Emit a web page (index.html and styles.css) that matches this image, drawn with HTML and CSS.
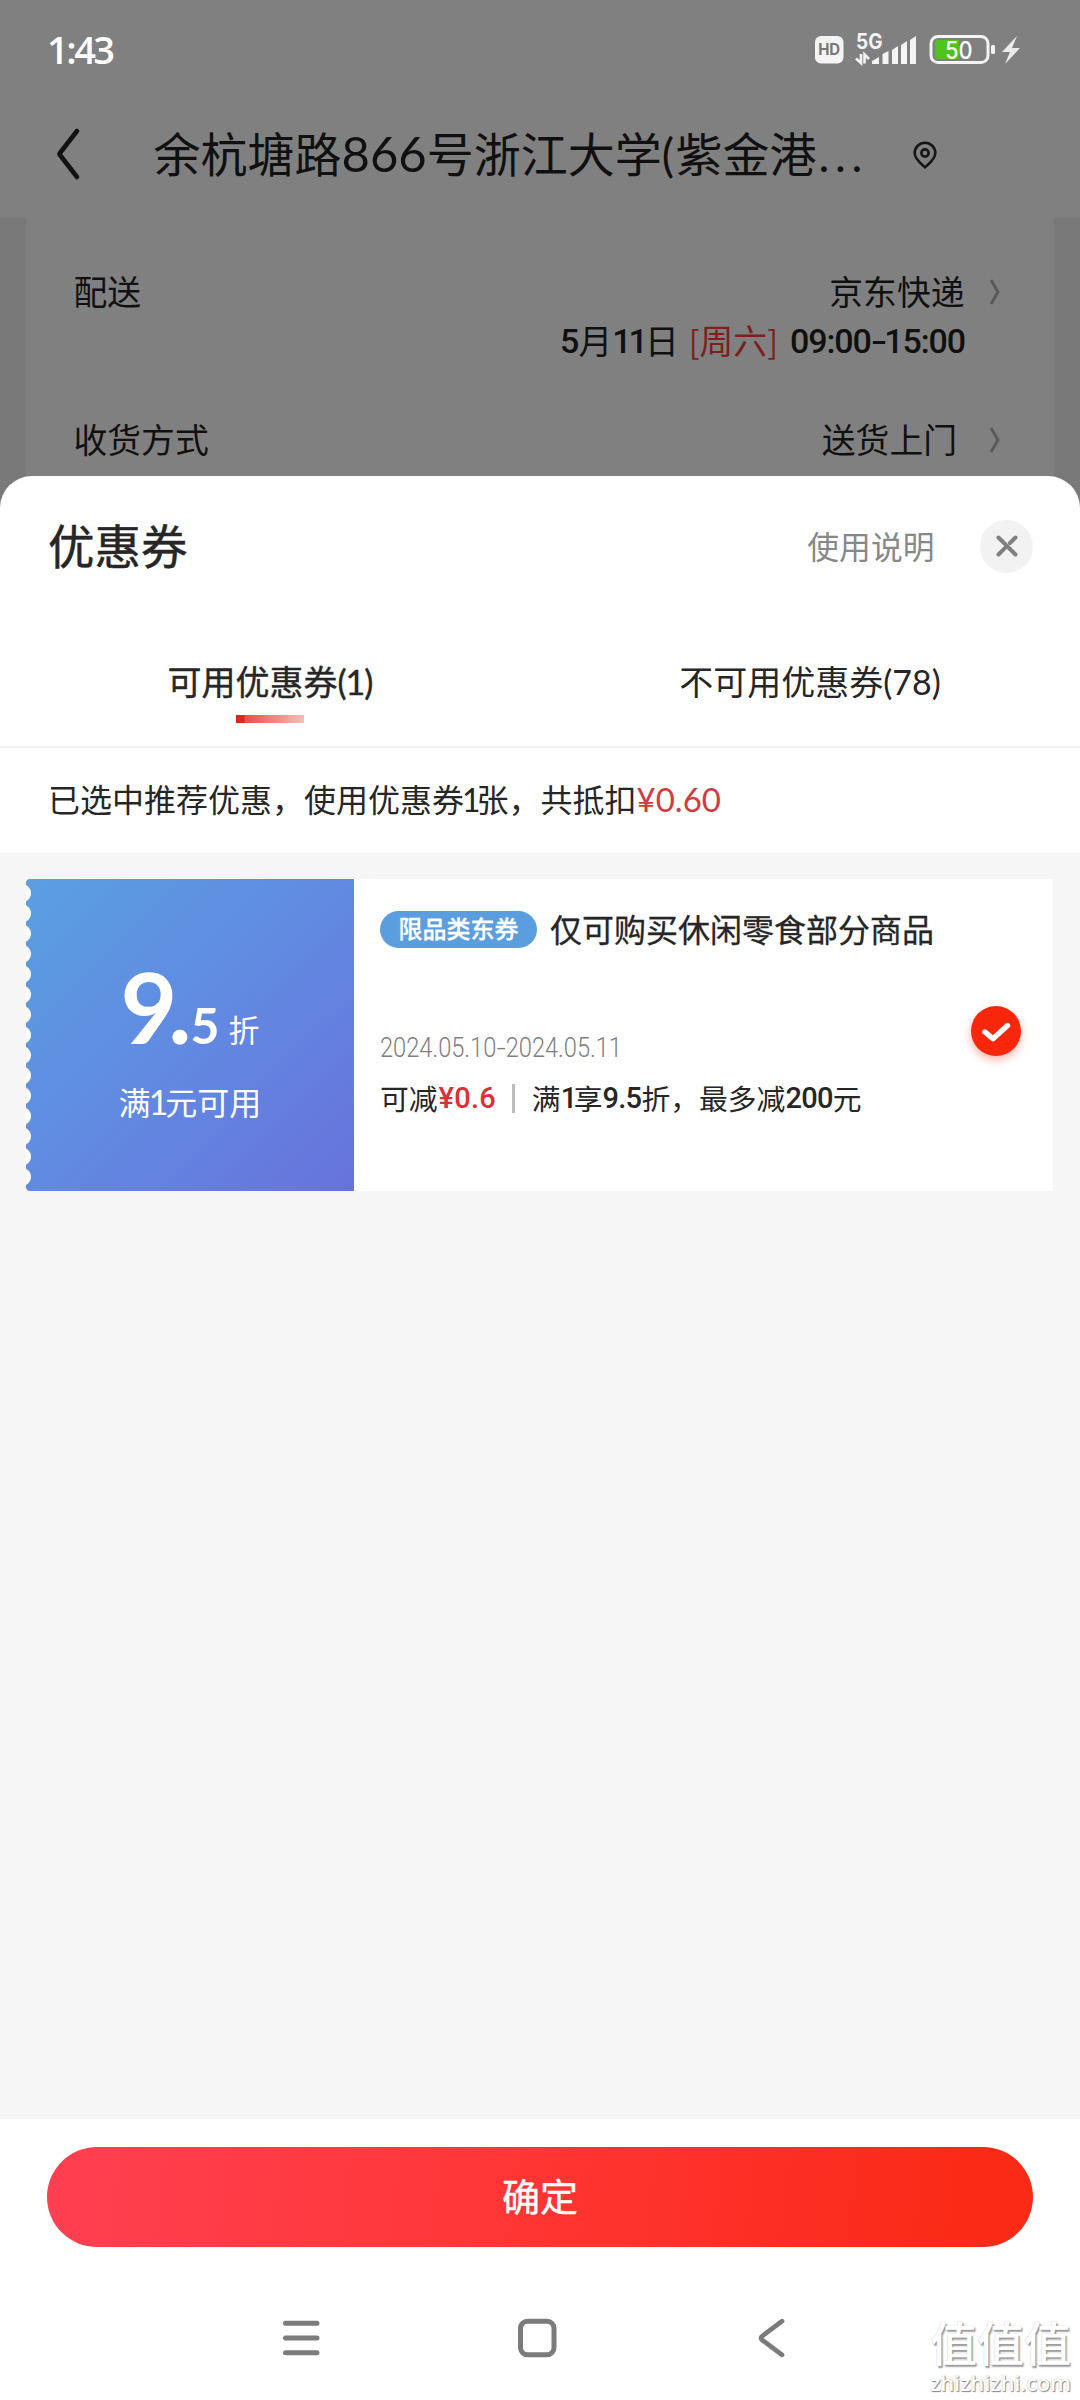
FILE: index.html
```html
<!DOCTYPE html>
<html lang="zh-CN">
<head>
<meta charset="utf-8">
<title>优惠券</title>
<link rel="stylesheet" href="styles.css">
</head>
<body>
<div class="screen">
  <div class="backdrop">
    <div class="status">
      <span class="time">1:43</span>
      <svg class="status-icons" width="210" height="40" viewBox="812 30 210 40">
        <rect x="815" y="36" width="28.5" height="27.5" rx="6" fill="#f4f4f4"/>
        <text x="829.2" y="55" class="hd" text-anchor="middle" textLength="22" lengthAdjust="spacingAndGlyphs">HD</text>
        <text x="856" y="48.5" class="net" textLength="26.500" lengthAdjust="spacingAndGlyphs">5G</text>
        <path d="M861 54v9l-5-4.500M864.500 63.500v-9l4.500 4.500" fill="none" stroke="#f4f4f4" stroke-width="2.600"/>
        <path d="M872 64v-3l7-4v7zM882.500 64V54l6-3v13zM892 64V50l6-4v18zM901 64V45l6-4v23zM910 64V40l6-4v28z" fill="#f4f4f4"/>
        <rect x="931" y="36.500" width="57" height="26" rx="7" fill="none" stroke="#f4f4f4" stroke-width="3"/>
        <path d="M938 40h21v19h-21a3 3 0 0 1-3-3V43a3 3 0 0 1 3-3z" fill="#4fc21b"/>
        <rect x="991" y="45" width="4" height="9" rx="1.500" fill="#f4f4f4"/>
        <text x="945" y="58.500" class="level" textLength="27.500" lengthAdjust="spacingAndGlyphs">50</text>
        <path d="M1017 36l-15 16h8l-5 12 15-16h-8z" fill="#ececec"/>
      </svg>
    </div>
    <div class="header">
      <svg class="back" width="28" height="56" viewBox="0 0 28 56"><path d="M23 5 6 27q-.8 1 0 2L23 51" fill="none" stroke="#111" stroke-width="4.600" stroke-linecap="round"/></svg>
      <span class="address">余杭塘路<span class="num">866</span>号浙江大学<span class="paren">(</span>紫金港<span class="dots">...</span></span>
      <svg class="pin" width="28" height="32" viewBox="0 0 28 32"><path d="M14 28.200c-2-2.200-10.300-7.200-10.300-14.200a10.300 10.300 0 0 1 20.600 0c0 7-8.300 12-10.300 14.200z" fill="none" stroke="#151515" stroke-width="2.600"/><circle cx="14" cy="14" r="3.600" fill="none" stroke="#151515" stroke-width="2.600"/></svg>
    </div>
    <div class="order">
      <div class="row">
        <span>配送</span>
        <span class="value">京东快递</span>
        <svg class="arrow" width="14" height="28" viewBox="0 0 14 28"><path d="M3 2l7 12-7 12" fill="none" stroke="#5a5a5a" stroke-width="3"/></svg>
      </div>
      <div class="slot"><b class="month">5</b>月<b class="eleven">11</b>日<span class="week"><i>[</i>周六<i>]</i></span><b class="hours">09:00<span class="dash">-</span>15:00</b></div>
      <div class="row second">
        <span>收货方式</span>
        <span class="value door">送货上门</span>
        <svg class="arrow" width="14" height="28" viewBox="0 0 14 28"><path d="M3 2l7 12-7 12" fill="none" stroke="#5a5a5a" stroke-width="3"/></svg>
      </div>
    </div>
  </div>

  <div class="sheet">
    <div class="sheet-head">
      <span class="sheet-title">优惠券</span>
      <span class="help">使用说明</span>
      <span class="close"><svg width="26" height="26" viewBox="0 0 26 26"><path d="M4.500 4.500l17 17M4.500 21.500l7.300-7.300M16 10l5.500-5.500" stroke="#808080" stroke-width="4" stroke-linecap="round"/></svg></span>
    </div>
    <div class="tabs">
      <div class="tab active"><span>可用优惠券<span class="num">(1)</span></span></div>
      <div class="tab"><span>不可用优惠券<span class="num">(78)</span></span></div>
    </div>
    <div class="notice">已选中推荐优惠，使用优惠券<span class="one">1</span>张，共抵扣<span class="amount">¥0.60</span></div>
    <div class="list">
      <div class="coupon">
        <div class="face">
          <div class="rate"><span class="big">9.</span><span class="small">5</span><span class="unit">折</span></div>
          <div class="cond">满<span class="one">1</span>元可用</div>
        </div>
        <div class="info">
          <div class="name"><span class="tag">限品类东券</span><span>仅可购买休闲零食部分商品</span></div>
          <div class="dates">2024.05.10<span class="dash">-</span>2024.05.11</div>
          <div class="detail">可减<b class="cut">¥0.6</b><span class="bar"></span>满<b class="mono1">1</b>享<b class="d95">9.5</b>折，最多减<b class="d200">200</b>元</div>
        </div>
        <div class="check"><svg width="50" height="50" viewBox="0 0 50 50"><path d="M14 26l8 6.800L36.500 19.500" fill="none" stroke="#fff" stroke-width="5.400" stroke-linecap="round" stroke-linejoin="round"/></svg></div>
      </div>
    </div>
    <div class="footer"><div class="confirm">确定</div></div>
    <div class="nav">
      <svg width="40" height="44" viewBox="0 0 40 44"><path d="M3.500 7.300h31.500M3.500 22h31.500M3.500 36.700h31.500" stroke="#7b7b7b" stroke-width="5" stroke-linecap="round"/></svg>
      <svg width="40" height="44" viewBox="0 0 40 44"><rect x="3.500" y="5.300" width="33.500" height="33.500" rx="7" fill="none" stroke="#7b7b7b" stroke-width="5"/></svg>
      <svg width="40" height="44" viewBox="0 0 40 44"><path d="M30 5.200 10.500 19.800q-3 2.200 0 4.400L30 38.800" fill="none" stroke="#7b7b7b" stroke-width="4.800" stroke-linecap="round"/></svg>
    </div>
  </div>
  <div class="watermark"><span class="mark">值值值</span><span class="site">zhizhizhi.com</span></div>
</div>
</body>
</html>
```
FILE: styles.css
```css
* { box-sizing: border-box; }
body { margin: 0; font-family: "Noto Sans CJK SC", sans-serif; color: #262626; }
.screen { position: relative; width: 1080px; height: 2400px; overflow: hidden; display: flex; flex-direction: column; background: #797979; }
.screen span, .screen b, .screen i { font-style: normal; }
.num, .paren, .dots, .one, .amount { font-family: Lato, sans-serif; line-height: 0; }

.backdrop { height: 476px; flex: none; color: #101010; }
.status { height: 100px; background: #808080; display: flex; justify-content: space-between; padding: 30px 58px 0 47px; }
.time { font: 600 38px/39px "Open Sans", sans-serif; letter-spacing: -2.5px; color: #fff; }
.hd { font: 700 16px Inter, sans-serif; fill: #777; }
.net { font: 700 21px Inter, sans-serif; fill: #f4f4f4; }
.level { font: 500 24px Inter, sans-serif; fill: #fff; }
.header { height: 118px; background: #808080; display: flex; align-items: center; padding: 0 0 10px 54px; }
.back { flex: none; }
.address { width: 746px; margin-left: 71.500px; font-size: 47px; line-height: 60px; white-space: nowrap; padding-bottom: 5px; }
.address .num { font-size: 49px; }
.address .paren { font-size: 46px; letter-spacing: 1.500px; }
.address .dots { font-size: 46px; letter-spacing: 5.600px; margin-left: 2px; }
.pin { margin: 2px 0 0 11px; }
.order { height: 258px; margin: 0 26px; background: #808080; padding: 49px 52px 0 47.500px; font-size: 33.800px; }
.row { display: flex; align-items: center; height: 48px; line-height: 48px; }
.value { margin-left: auto; margin-right: 23.500px; }
.door { margin-right: 31px; }
.arrow { flex: none; margin: 2px 0 0; }
.slot { display: flex; justify-content: flex-end; height: 48px; line-height: 49px; padding-right: 37px; }
.slot b { font: 500 34px/52px Roboto, sans-serif; }
.slot .month { letter-spacing: -0.800px; }
.slot .eleven { letter-spacing: -3px; }
.slot .week { color: #7d1f1a; margin: 0 12px 0 10px; }
.slot i { font-size: 32px; }
.slot .hours { letter-spacing: -1.100px; }
.dash { display: inline-block; transform: scaleX(1.400); margin: 0 1px 0 2px; }
.second { margin-top: 52px; }

.sheet { flex: 1; display: flex; flex-direction: column; background: #fff; border-radius: 32px 32px 0 0; overflow: hidden; }
.sheet-head { height: 140px; display: flex; align-items: center; padding: 0 47px 0 48px; }
.sheet-title { font-size: 46.500px; line-height: 60px; padding-bottom: 4px; -webkit-text-stroke: 0.500px currentColor; }
.help { margin-left: auto; margin-right: 45.500px; font-size: 31.800px; line-height: 44px; color: #888; padding-bottom: 3px; }
.close { width: 53px; height: 53px; border-radius: 50%; background: #f2f2f2; display: flex; align-items: center; justify-content: center; }
.tabs { height: 132px; display: flex; border-bottom: 2px solid #f2f2f2; font-size: 34px; }
.tab { flex: 1; display: flex; flex-direction: column; align-items: center; padding-top: 41px; line-height: 48px; }
.tab .num { font-size: 34px; }
.active span { -webkit-text-stroke: 0.400px currentColor; }
.active .num { letter-spacing: -1px; }
.active::after { content: ""; width: 68px; height: 8px; margin-top: 10px; background: linear-gradient(90deg, #d9291f 0 12%, #e65045 13%, #f7bfba); }
.notice { height: 105px; padding: 0 48px; font-size: 32px; line-height: 100px; white-space: nowrap; }
.one { margin-left: -2px; }
.notice .one { letter-spacing: -4px; }
.amount { font-size: 33px; color: #d33a40; }
.list { flex: 1; background: #f6f6f6; padding: 26px 27px 0 26px; }
.coupon { height: 312px; display: flex; background: #fff; }
.face { position: relative; width: 328px; background: linear-gradient(135deg, #5a9fe2, #618ae1 50%, #6872dc); color: #fff; border-radius: 4px 0 0 4px; overflow: hidden; display: flex; flex-direction: column; align-items: center; }
.face::before { content: ""; position: absolute; left: 0; top: 4px; width: 6px; height: 304px; background: radial-gradient(circle at -4px 50%, #fafafa 8.600px, transparent 9.400px) 0 0 / 6px 20.270px; }
.rate { height: 100px; margin-top: 77px; display: flex; align-items: baseline; line-height: 100px; font-family: Lato, sans-serif; font-weight: 700; }
.big { font-size: 98px; letter-spacing: -9px; }
.small { font-size: 50px; font-weight: 700; margin-left: 8px; }
.unit { font-family: "Noto Sans CJK SC", sans-serif; font-weight: 400; font-size: 31px; line-height: 40px; margin-left: 9px; padding-bottom: 3px; align-self: flex-end; margin-bottom: 4px; }
.cond { margin-top: 22px; font-size: 32px; line-height: 46px; }
.cond .one { letter-spacing: -3px; font-size: 34px; }
.info { flex: 1; padding: 30px 0 0 26px; }
.name { display: flex; align-items: center; gap: 13px; height: 40px; font-size: 32px; white-space: nowrap; -webkit-text-stroke: 0.300px currentColor; }
.name span { line-height: 38px; padding-bottom: 3px; }
.name .tag { flex: none; width: 157px; height: 37px; border-radius: 19px; background: #5a9ee0; color: #fff; font-size: 24px; line-height: 34px; font-weight: 500; text-align: center; padding: 0; }
.dates { margin-top: 81px; width: 300px; height: 34px; font: 300 27.500px/35px Roboto, sans-serif; color: #808080; transform: scaleX(0.860); transform-origin: 0 0; }
.detail { display: flex; align-items: center; margin-top: 14px; height: 40px; font-size: 28.800px; line-height: 40px; white-space: nowrap; }
.detail b { font: 500 29px/42px Roboto, sans-serif; letter-spacing: -0.700px; }
.detail .cut { color: #dc3038; letter-spacing: 0.200px; margin-left: 1px; }
.detail .mono1 { width: 13px; letter-spacing: -2px; }
.bar { width: 3px; height: 29px; background: #bdbdbd; margin: 0 17px 0 16px; }
.check { width: 50px; height: 50px; margin: 127px 32px 0 0; border-radius: 50%; background: #f8270b; box-shadow: 0 4px 8px rgba(248, 39, 11, 0.350); }
.footer { height: 160px; padding: 28px 47px 0; }
.confirm { height: 100px; border-radius: 50px; background: linear-gradient(97deg, #ff4052, #ff3533 50%, #fa2a17 92%); color: #fff; font-size: 38px; line-height: 95px; -webkit-text-stroke: 0.400px currentColor; text-align: center; }
.nav { height: 121px; display: flex; justify-content: center; gap: 195px; padding: 37px 7px 0 0; }
.watermark { position: absolute; left: 930px; top: 2316px; width: 146px; display: flex; flex-direction: column; gap: 4px; color: #fff; white-space: nowrap; }
.mark { font-size: 47px; line-height: 50px; font-weight: 500; text-shadow: 1.500px 1.500px 1.500px #999, 0 0 1px #bbb; }
.site { font: 600 22px/24px "Open Sans", sans-serif; letter-spacing: -0.200px; text-shadow: 1px 1px 1px #888, 0 0 1px #aaa; }
```
